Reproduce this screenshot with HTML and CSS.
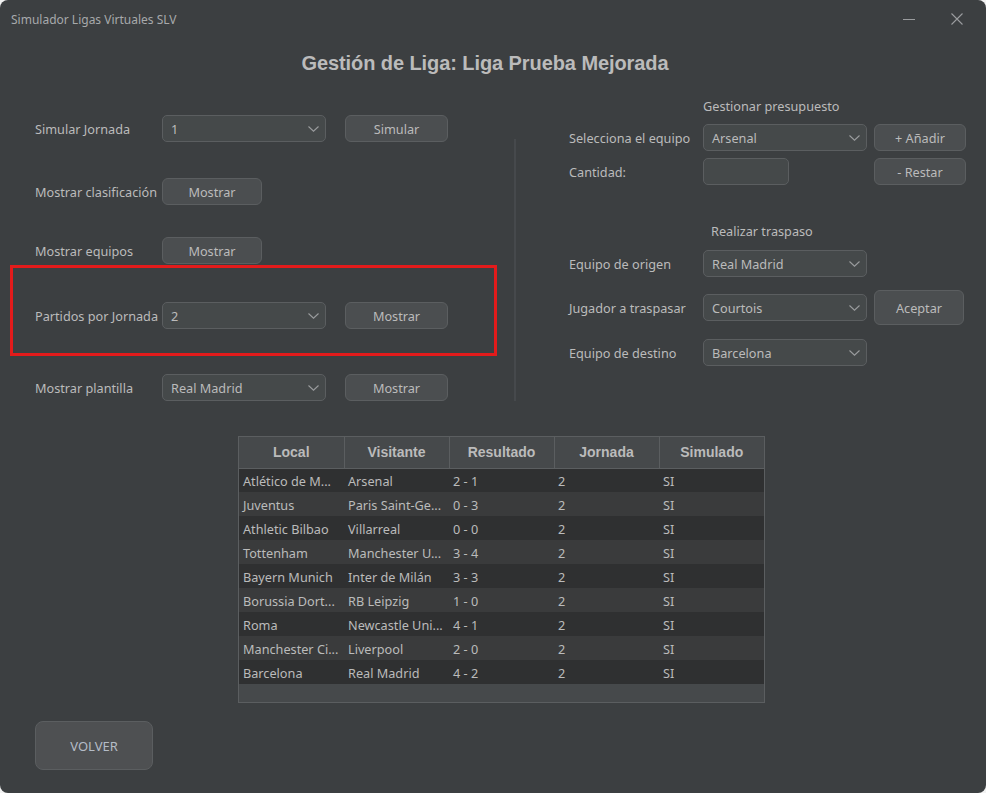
FILE: index.html
```html
<!DOCTYPE html>
<html lang="es">
<head>
<meta charset="utf-8">
<title>Simulador Ligas Virtuales SLV</title>
<link rel="stylesheet" href="styles.css">
</head>
<body>
<div class="window">
  <div class="titlebar">
    <span class="app-title">Simulador Ligas Virtuales SLV</span>
    <div class="win-controls">
      <span class="win-min"></span>
      <svg class="win-close" width="12" height="12" viewBox="0 0 12 12"><path d="M0.5 0.5 L11.5 11.5 M11.5 0.5 L0.5 11.5" stroke="#9a9c9e" stroke-width="1.1" fill="none"/></svg>
    </div>
  </div>

  <h1 class="heading">Gestión de Liga: Liga Prueba Mejorada</h1>

  <div class="main">
    <div class="left">
      <div class="row row-1">
        <span class="label">Simular Jornada</span>
        <div class="combo"><span class="ctext">1</span><svg class="chev" width="11" height="6" viewBox="0 0 11 6"><path d="M0.5 0.5 L5.5 5.2 L10.5 0.5" stroke="#9a9c9e" stroke-width="1.1" fill="none"/></svg></div>
        <button class="btn btn-md">Simular</button>
      </div>
      <div class="row row-2">
        <span class="label">Mostrar clasificación</span>
        <button class="btn btn-sm">Mostrar</button>
      </div>
      <div class="row row-3">
        <span class="label">Mostrar equipos</span>
        <button class="btn btn-sm">Mostrar</button>
      </div>
      <div class="highlight">
        <div class="row row-4">
          <span class="label">Partidos por Jornada</span>
          <div class="combo"><span class="ctext">2</span><svg class="chev" width="11" height="6" viewBox="0 0 11 6"><path d="M0.5 0.5 L5.5 5.2 L10.5 0.5" stroke="#9a9c9e" stroke-width="1.1" fill="none"/></svg></div>
          <button class="btn btn-md">Mostrar</button>
        </div>
      </div>
      <div class="row row-5">
        <span class="label">Mostrar plantilla</span>
        <div class="combo"><span class="ctext">Real Madrid</span><svg class="chev" width="11" height="6" viewBox="0 0 11 6"><path d="M0.5 0.5 L5.5 5.2 L10.5 0.5" stroke="#9a9c9e" stroke-width="1.1" fill="none"/></svg></div>
        <button class="btn btn-md">Mostrar</button>
      </div>
    </div>

    <div class="sep"></div>

    <div class="right">
      <div class="section-title st-1">Gestionar presupuesto</div>
      <div class="rrow rr-1">
        <span class="rlabel">Selecciona el equipo</span>
        <div class="combo"><span class="ctext">Arsenal</span><svg class="chev" width="11" height="6" viewBox="0 0 11 6"><path d="M0.5 0.5 L5.5 5.2 L10.5 0.5" stroke="#9a9c9e" stroke-width="1.1" fill="none"/></svg></div>
        <button class="btn btn-r">+ Añadir</button>
      </div>
      <div class="rrow rr-2">
        <span class="rlabel">Cantidad:</span>
        <div class="field"></div>
        <button class="btn btn-r">- Restar</button>
      </div>
      <div class="section-title st-2">Realizar traspaso</div>
      <div class="rrow rr-3">
        <span class="rlabel">Equipo de origen</span>
        <div class="combo"><span class="ctext">Real Madrid</span><svg class="chev" width="11" height="6" viewBox="0 0 11 6"><path d="M0.5 0.5 L5.5 5.2 L10.5 0.5" stroke="#9a9c9e" stroke-width="1.1" fill="none"/></svg></div>
      </div>
      <div class="rrow rr-4">
        <span class="rlabel">Jugador a traspasar</span>
        <div class="combo"><span class="ctext">Courtois</span><svg class="chev" width="11" height="6" viewBox="0 0 11 6"><path d="M0.5 0.5 L5.5 5.2 L10.5 0.5" stroke="#9a9c9e" stroke-width="1.1" fill="none"/></svg></div>
        <button class="btn btn-accept">Aceptar</button>
      </div>
      <div class="rrow rr-5">
        <span class="rlabel">Equipo de destino</span>
        <div class="combo"><span class="ctext">Barcelona</span><svg class="chev" width="11" height="6" viewBox="0 0 11 6"><path d="M0.5 0.5 L5.5 5.2 L10.5 0.5" stroke="#9a9c9e" stroke-width="1.1" fill="none"/></svg></div>
      </div>
    </div>
  </div>

  <div class="table-wrap">
    <table class="matches">
      <thead>
        <tr><th>Local</th><th>Visitante</th><th>Resultado</th><th>Jornada</th><th>Simulado</th></tr>
      </thead>
      <tbody>
        <tr><td>Atlético de M...</td><td>Arsenal</td><td>2 - 1</td><td>2</td><td>SI</td></tr>
        <tr><td>Juventus</td><td>Paris Saint-Ge...</td><td>0 - 3</td><td>2</td><td>SI</td></tr>
        <tr><td>Athletic Bilbao</td><td>Villarreal</td><td>0 - 0</td><td>2</td><td>SI</td></tr>
        <tr><td>Tottenham</td><td>Manchester U...</td><td>3 - 4</td><td>2</td><td>SI</td></tr>
        <tr><td>Bayern Munich</td><td>Inter de Milán</td><td>3 - 3</td><td>2</td><td>SI</td></tr>
        <tr><td>Borussia Dort...</td><td>RB Leipzig</td><td>1 - 0</td><td>2</td><td>SI</td></tr>
        <tr><td>Roma</td><td>Newcastle Uni...</td><td>4 - 1</td><td>2</td><td>SI</td></tr>
        <tr><td>Manchester Ci...</td><td>Liverpool</td><td>2 - 0</td><td>2</td><td>SI</td></tr>
        <tr><td>Barcelona</td><td>Real Madrid</td><td>4 - 2</td><td>2</td><td>SI</td></tr>
      </tbody>
    </table>
  </div>

  <button class="volver">VOLVER</button>
</div>
</body>
</html>
```

FILE: styles.css
```css
* { box-sizing: border-box; }

html, body {
  margin: 0;
  padding: 0;
  background: #f2f2f2;
}

.window {
  width: 986px;
  height: 793px;
  background: #3c3f41;
  border-radius: 8px;
  overflow: hidden;
  font-family: "Noto Sans", "Open Sans", sans-serif;
  font-size: 12.7px;
  color: #bbbbbb;
  display: flex;
  flex-direction: column;
  align-items: flex-start;
}

/* Title bar */
.titlebar {
  width: 100%;
  height: 38px;
  display: flex;
  align-items: center;
  justify-content: space-between;
  padding: 0 23px 0 11px;
}
.app-title {
  font-size: 12px;
  color: #a7a9ab;
}
.win-controls {
  display: flex;
  align-items: center;
  gap: 36px;
}
.win-min {
  display: block;
  width: 12px;
  height: 1px;
  background: #9a9c9e;
}
.win-close { display: block; }

/* Heading */
.heading {
  align-self: stretch;
  margin: 13px 0 0 0;
  height: 24px;
  line-height: 24px;
  text-align: center;
  font-family: "Liberation Sans", Arial, sans-serif;
  font-weight: bold;
  font-size: 20px;
  letter-spacing: -0.08px;
  color: #bbbbbb;
  padding-right: 16px;
}

/* Main */
.main {
  display: flex;
  align-items: flex-start;
  width: 100%;
}

.left {
  width: 514px;
  display: flex;
  flex-direction: column;
}

.row {
  display: flex;
  align-items: center;
  height: 27px;
  padding-left: 35px;
}
.row-1 { margin-top: 40px; }
.row-2 { margin-top: 36px; }
.row-3 { margin-top: 32px; }
.row-5 { margin-top: 18px; }

.label, .rlabel, .ctext {
  padding-top: 1px;
  white-space: nowrap;
}

.label {
  width: 127px;
  flex: none;
}

.highlight {
  margin: 1px 0 0 10px;
  width: 487px;
  height: 91px;
  border: 3px solid #e31b1b;
}
.highlight .row {
  margin-top: 34px;
  padding-left: 22px;
}

.combo {
  width: 164px;
  height: 27px;
  flex: none;
  border: 1px solid #5b5e60;
  border-radius: 5px;
  background: #45494a;
  display: flex;
  align-items: center;
  justify-content: space-between;
  padding: 0 6px 0 8px;
  color: #bbbbbb;
}
.chev { display: block; margin-top: 1px; }

.btn {
  height: 27px;
  flex: none;
  border: 1px solid #5b5e60;
  border-radius: 6px;
  background: #4b4e50;
  color: #bbbbbb;
  font-family: "Noto Sans", "Open Sans", sans-serif;
  font-size: 12.7px;
  padding: 1px 0 0 0;
  cursor: pointer;
}
.btn-md { width: 103px; margin-left: 19px; }
.btn-sm { width: 100px; }
.btn-r { width: 92px; margin-left: 7px; }
.btn-accept { width: 90px; height: 35px; margin-left: 7px; }

.sep {
  width: 2px;
  height: 262px;
  margin-top: 64px;
  background: #46494c;
  flex: none;
}

.right {
  flex: 1;
  display: flex;
  flex-direction: column;
  padding-left: 53px;
}
.section-title {
  height: 18px;
  line-height: 18px;
  white-space: nowrap;
}
.st-1 { margin-top: 22px; padding-left: 134px; }
.st-2 { margin-top: 37px; padding-left: 142px; }

.rrow {
  display: flex;
  align-items: center;
  height: 27px;
}
.rr-1 { margin-top: 9px; }
.rr-2 { margin-top: 7px; }
.rr-3 { margin-top: 10px; }
.rr-4 { margin-top: 13px; height: 35px; }
.rr-5 { margin-top: 14px; }

.rlabel {
  width: 134px;
  flex: none;
}

.field {
  width: 86px;
  height: 27px;
  border: 1px solid #5b5e60;
  border-radius: 5px;
  background: #45494a;
  flex: none;
  margin-right: 78px;
}

/* Table */
.table-wrap {
  margin: 35px 0 0 238px;
  width: 527px;
  height: 267px;
  border: 1px solid #5b5e60;
  background: #46494b;
  overflow: hidden;
}
.matches {
  border-collapse: collapse;
  table-layout: fixed;
  width: 525px;
}
.matches th {
  width: 105px;
  height: 31px;
  font-family: "Liberation Sans", Arial, sans-serif;
  font-weight: bold;
  font-size: 14px;
  color: #bbbbbb;
  background: #46494b;
  border-right: 1px solid #5b5e60;
  border-bottom: 1px solid #5b5e60;
  padding: 0;
  text-align: center;
}
.matches th:last-child { border-right: none; }
.matches td {
  height: 24px;
  padding: 2px 0 0 4px;
  white-space: nowrap;
  overflow: hidden;
  color: #bbbbbb;
}
.matches tbody tr:nth-child(odd) td { background: #2f3031; }
.matches tbody tr:nth-child(even) td { background: #3a3b3c; }

.volver {
  margin: 18px 0 0 35px;
  width: 118px;
  height: 49px;
  border: 1px solid #5b5e60;
  border-radius: 8px;
  background: #4e5052;
  color: #b4bcc6;
  font-family: "Noto Sans", "Open Sans", sans-serif;
  font-size: 13px;
  padding: 0;
}
```
